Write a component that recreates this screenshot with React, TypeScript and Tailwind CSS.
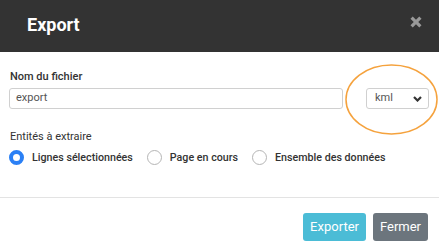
import React from "react";

function Radio({ label, checked }: { label: string; checked?: boolean }) {
  return (
    <label className="flex items-center gap-[8px]">
      {checked ? (
        <span className="w-[15px] h-[15px] rounded-full border-[4.5px] border-[#2b80f5] bg-white" />
      ) : (
        <span className="w-[15px] h-[15px] rounded-full border border-[#b5b5b5] bg-white" />
      )}
      <span className="text-[10.7px] leading-[13px] font-medium text-[#333]">{label}</span>
    </label>
  );
}

export default function App() {
  return (
    <div className="relative w-[439px] h-[252px] bg-white font-['Roboto',sans-serif] overflow-hidden">
      {/* header */}
      <div className="h-[52px] bg-[#333333] flex items-center justify-between pl-[27px] pr-[17px] pb-[4px]">
        <div className="text-[18px] font-bold text-white">Export</div>
        <svg width="12" height="12" viewBox="0 0 12 12" className="mb-[4px]">
          <path d="M1.6 1.6 L10.4 10.4 M10.4 1.6 L1.6 10.4" stroke="#999999" strokeWidth="3.2" />
        </svg>
      </div>

      {/* body */}
      <div className="pt-[18px] pb-[32px] border-b border-[#e3e3e3]">
        <div className="pl-[10px] mb-[5px] text-[11px] leading-[13px] font-medium text-[#333]">Nom du fichier</div>
        <div className="flex pl-[9px] pr-[10px] gap-[23px]">
          <div className="flex-1 h-[21px] border border-[#d0d0d0] rounded-[3px] flex items-center pl-[6px] text-[11px] text-[#555]">
            export
          </div>
          <div className="w-[63px] h-[21px] border border-[#d0d0d0] rounded-[3px] flex items-center justify-between pl-[8px] pr-[6px] text-[11px] text-[#555]">
            <span>kml</span>
            <svg width="9" height="6" viewBox="0 0 9 6">
              <path d="M1 1 L4.5 4.5 L8 1" fill="none" stroke="#333" strokeWidth="2.2" />
            </svg>
          </div>
        </div>

        <div className="pl-[10px] mt-[21px] text-[11px] leading-[13px] text-[#333]">Entités à extraire</div>
        <div className="flex items-center gap-[14px] pl-[9px] mt-[7px]">
          <Radio label="Lignes sélectionnées" checked />
          <Radio label="Page en cours" />
          <Radio label="Ensemble des données" />
        </div>
      </div>

      {/* footer */}
      <div className="flex justify-end gap-[7px] pr-[11px] pt-[15px]">
        <button className="h-[28px] px-[7px] rounded-[3px] bg-[#4bbcd6] text-white text-[13px]">Exporter</button>
        <button className="h-[28px] px-[7px] rounded-[3px] bg-[#6c757d] text-white text-[13px]">Fermer</button>
      </div>

      {/* annotation */}
      <svg className="absolute left-[345px] top-[64px]" width="94" height="72" viewBox="0 0 94 72">
        <ellipse cx="46.5" cy="35.5" rx="45.5" ry="34.5" fill="none" stroke="#f5a23d" strokeWidth="1.5" />
      </svg>
    </div>
  );
}
